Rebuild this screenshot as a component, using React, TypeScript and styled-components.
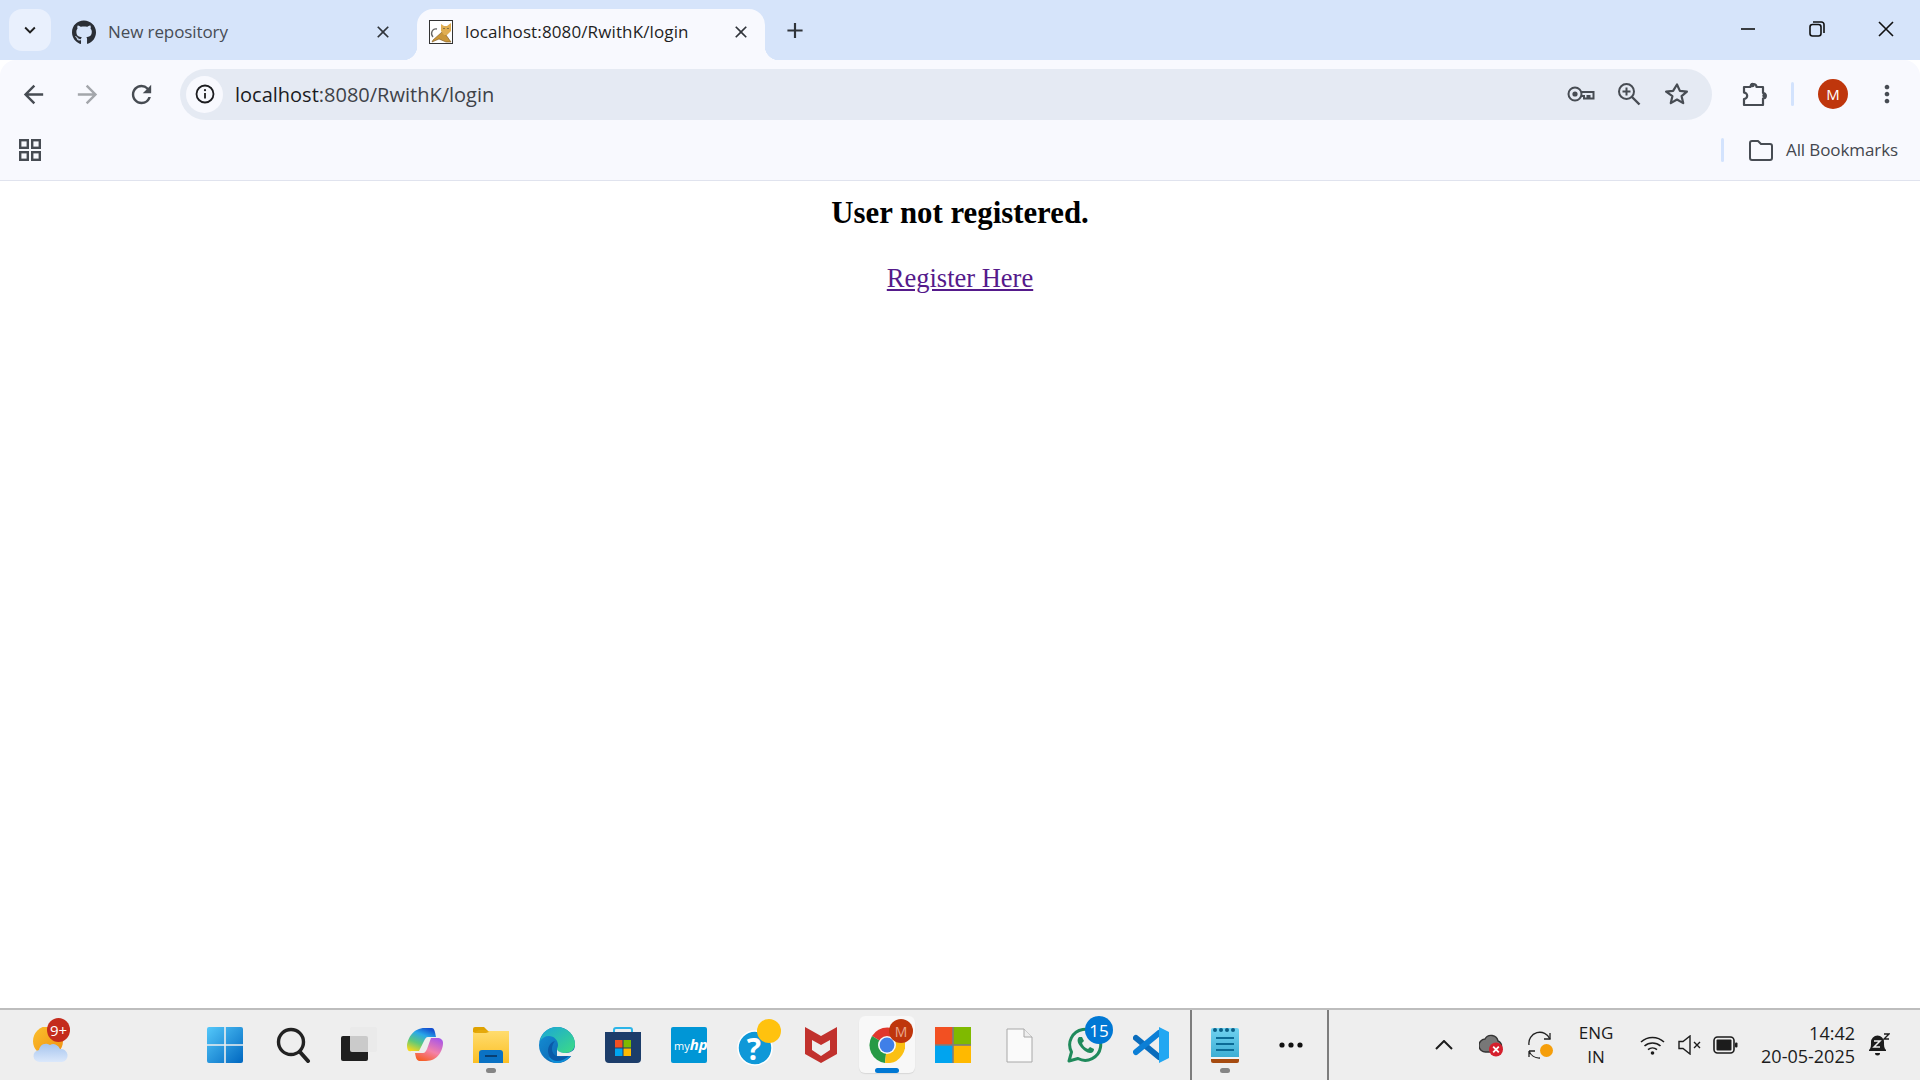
import React from 'react'
import styled, { createGlobalStyle } from 'styled-components'
import { FaGithub } from 'react-icons/fa'
import { MdArrowBack, MdArrowForward, MdRefresh, MdClose, MdAdd, MdKeyboardArrowDown, MdMoreVert } from 'react-icons/md'

const GlobalStyle = createGlobalStyle`
  html, body {
    margin: 0;
    padding: 0;
    background: #fff;
    overflow: hidden;
  }
`

const UI_FONT = `'Open Sans', 'Noto Sans', sans-serif`

const Screen = styled.div`
  width: 1920px;
  height: 1080px;
  display: flex;
  flex-direction: column;
  overflow: hidden;
  font-family: ${UI_FONT};
`

/* browser tabs */
const TabStrip = styled.div`
  height: 60px;
  flex: none;
  display: flex;
  background: #d6e4fa;
  padding-left: 9px;
`
const TabListButton = styled.div`
  width: 42px;
  height: 42px;
  margin-top: 9px;
  border-radius: 13px;
  background: #e9f0fd;
  display: flex;
  align-items: center;
  justify-content: center;
  color: #1f1f1f;
  font-size: 22px;
`
const Tab = styled.div<{ $active?: boolean }>`
  position: relative;
  height: 51px;
  margin-top: 9px;
  width: ${p => (p.$active ? '348px' : '366px')};
  padding-left: ${p => (p.$active ? '12px' : '21px')};
  box-sizing: border-box;
  display: flex;
  align-items: center;
  padding-bottom: 6px;
  border-radius: 16px 16px 0 0;
  background: ${p => (p.$active ? '#f8f9fe' : 'transparent')};
  color: ${p => (p.$active ? '#1f1f1f' : '#474c55')};
  font-size: 17px;
  letter-spacing: ${p => (p.$active ? '0.12px' : '-0.1px')};

  ${p =>
    p.$active &&
    `
    &::before, &::after {
      content: '';
      position: absolute;
      bottom: 0;
      width: 14px;
      height: 14px;
    }
    &::before {
      left: -14px;
      background: radial-gradient(circle at 0 0, transparent 14px, #f8f9fe 14.5px);
    }
    &::after {
      right: -14px;
      background: radial-gradient(circle at 100% 0, transparent 14px, #f8f9fe 14.5px);
    }
  `}
`
const TabIconSlot = styled.div`
  width: 24px;
  height: 24px;
  flex: none;
  margin-right: 12px;
  display: flex;
  font-size: 25px;
  color: #2a2e35;
`
const TabTitle = styled.span`
  flex: 1;
  white-space: nowrap;
`
const TabClose = styled.div<{ $active?: boolean }>`
  width: 20px;
  height: 20px;
  flex: none;
  margin-right: ${p => (p.$active ? '14px' : '24px')};
  display: flex;
  align-items: center;
  justify-content: center;
  font-size: 20px;
  color: #30343a;
`
const NewTab = styled.div`
  margin-left: 17px;
  margin-top: 17px;
  width: 26px;
  height: 26px;
  display: flex;
  align-items: center;
  justify-content: center;
  font-size: 27px;
  color: #30343a;
`
const Spacer = styled.div`
  flex: 1;
`
const WindowButton = styled.div`
  width: 69px;
  height: 58px;
  display: flex;
  align-items: center;
  justify-content: center;
`

/* toolbar */
const Toolbar = styled.div`
  height: 70px;
  box-sizing: border-box;
  flex: none;
  display: flex;
  align-items: center;
  background: #f8f9fe;
  border-radius: 16px 16px 0 0;
  position: relative;
  z-index: 1;
  padding: 0 0 2px 15px;
`
const NavButton = styled.div<{ $dim?: boolean }>`
  width: 36px;
  height: 36px;
  margin-right: 18px;
  display: flex;
  align-items: center;
  justify-content: center;
  font-size: 29px;
  color: ${p => (p.$dim ? '#a3a6ab' : '#474c53')};
`
const Omnibox = styled.div`
  width: 1532px;
  height: 51px;
  margin-left: 3px;
  flex: none;
  box-sizing: border-box;
  padding: 0 21px 0 6px;
  border-radius: 26px;
  background: #e5eaf3;
  display: flex;
  align-items: center;
`
const SiteInfo = styled.div`
  width: 37px;
  height: 37px;
  border-radius: 50%;
  background: #f8f9fe;
  display: flex;
  align-items: center;
  justify-content: center;
  flex: none;
`
const UrlText = styled.div`
  flex: 1;
  margin-left: 12px;
  font-size: 20px;
  color: #3e4248;
  white-space: nowrap;
`
const UrlHost = styled.span`
  color: #1b1c1f;
`
const OmniIcon = styled.div`
  width: 28px;
  height: 28px;
  margin-left: 20px;
  display: flex;
  align-items: center;
  justify-content: center;
`
const ToolbarIcon = styled.div`
  width: 28px;
  height: 28px;
  margin-left: 28px;
  display: flex;
  align-items: center;
  justify-content: center;
`
const ThinSeparator = styled.div<{ $h: number }>`
  width: 3px;
  height: ${p => p.$h}px;
  margin-left: 23px;
  background: #d3e3fd;
  border-radius: 2px;
  flex: none;
`
const Avatar = styled.div`
  width: 30px;
  height: 30px;
  margin-left: 24px;
  border-radius: 50%;
  background: #bf360c;
  color: #fff;
  font-size: 15px;
  display: flex;
  align-items: center;
  justify-content: center;
  flex: none;
`
const MenuDots = styled.div`
  margin-left: 25px;
  width: 28px;
  height: 28px;
  display: flex;
  align-items: center;
  justify-content: center;
  color: #474c53;
  font-size: 30px;
`

/* bookmarks bar */
const BookmarksBar = styled.div`
  height: 51px;
  box-sizing: border-box;
  flex: none;
  display: flex;
  align-items: flex-start;
  padding: 8px 0 0 19px;
  background: #f8f9fe;
  border-bottom: 1px solid #e0e3ee;
`
const AppsSlot = styled.div`
  display: flex;
  padding-top: 1px;
`
const AllBookmarks = styled.div`
  display: flex;
  align-items: center;
  height: 24px;
  margin-left: auto;
  padding-right: 22px;
  font-size: 17px;
  line-height: 22px;
  color: #44474e;
  letter-spacing: -0.1px;
`
const BookmarkSeparator = styled.div`
  width: 3px;
  height: 24px;
  background: #d3e3fd;
  margin-right: 25px;
  border-radius: 2px;
`
const FolderSlot = styled.div`
  width: 26px;
  height: 24px;
  margin-right: 11px;
  display: flex;
  align-items: center;
`

/* page content */
const Content = styled.main`
  flex: 1;
  background: #fff;
  text-align: center;
  font-family: 'Liberation Serif', 'Times New Roman', serif;
  padding-top: 14px;
  color: #000;
`
const Title = styled.h2`
  margin: 0;
  font-size: 30.8px;
  font-weight: 700;
  line-height: 36px;
`
const Paragraph = styled.p`
  margin: 32px 0 0;
  font-size: 26.5px;
  line-height: 30px;
`
const RegisterLink = styled.a`
  color: #551a8b;
  text-decoration: underline;
`

/* windows taskbar */
const Taskbar = styled.footer`
  height: 72px;
  box-sizing: border-box;
  flex: none;
  display: flex;
  align-items: stretch;
  background: #eeeeee;
  border-top: 2px solid #bdbdbd;
`
const WeatherCell = styled.div`
  position: relative;
  width: 66px;
  flex: none;
  margin: 0 110px 0 18px;
  display: flex;
  align-items: center;
  justify-content: center;
`
const IconCell = styled.div`
  position: relative;
  width: 66px;
  flex: none;
  display: flex;
  align-items: center;
  justify-content: center;
`
const IconFront = styled.div`
  position: relative;
  display: flex;
`
const ActiveTile = styled.div`
  position: absolute;
  left: 5px;
  top: 6px;
  width: 56px;
  height: 57px;
  background: #f8f8f8;
  border-radius: 6px;
  box-shadow: 0 1px 1px #d8d8d8;
`
const ActiveBar = styled.div`
  position: absolute;
  left: 21px;
  bottom: 7px;
  width: 24px;
  height: 5px;
  border-radius: 3px;
  background: #0078d4;
`
const RunningDot = styled.div`
  position: absolute;
  left: 28px;
  bottom: 7px;
  width: 10px;
  height: 5px;
  border-radius: 3px;
  background: #858585;
`
const CountBadge = styled.div<{ $bg: string; $fg?: string; $x: number; $y: number; $w: number; $h: number; $size: number }>`
  position: absolute;
  left: ${p => p.$x}px;
  top: ${p => p.$y}px;
  width: ${p => p.$w}px;
  height: ${p => p.$h}px;
  border-radius: 50%;
  background: ${p => p.$bg};
  color: ${p => p.$fg || '#fff'};
  font-size: ${p => p.$size}px;
  display: flex;
  align-items: center;
  justify-content: center;
`
const TaskSeparator = styled.div<{ $left: number }>`
  width: 2px;
  flex: none;
  margin-left: ${p => p.$left}px;
  background: #7d7d7d;
`
const Tray = styled.div`
  flex: 1;
  display: flex;
  align-items: center;
  padding-left: 100px;
`
const TrayIcon = styled.div<{ $w: number; $ml: number }>`
  width: ${p => p.$w}px;
  margin-left: ${p => p.$ml}px;
  flex: none;
  display: flex;
  align-items: center;
  justify-content: center;
`
const LangBlock = styled.div`
  width: 44px;
  margin-left: 20px;
  flex: none;
  text-align: center;
  font-size: 17px;
  line-height: 24px;
  color: #1c1c1c;
`
const Clock = styled.div`
  width: 104px;
  margin-left: 13px;
  flex: none;
  text-align: right;
  font-size: 18px;
  line-height: 23px;
  color: #1c1c1c;
  white-space: nowrap;
`

const TomcatIcon = () => (
  <svg width="24" height="24" viewBox="0 0 24 24">
    <rect x="0.5" y="0.5" width="23" height="23" fill="#fff" stroke="#333" />
    <path d="M4 17c-3-3-1-9 4-8" fill="none" stroke="#666" strokeWidth="1.3" />
    <path d="M13 12L4 20l-1 2 7-3 7 3h5l-5-7z" fill="#c9963a" stroke="#7a5520" strokeWidth="0.6" />
    <path d="M12 4l3 2h3l4-3v8l-4 4h-3l-3-4z" fill="#e0ae52" />
    <path d="M14.5 8.5h1M18.5 8.5h1" stroke="#333" strokeWidth="1" />
  </svg>
)

const MinimizeIcon = () => (
  <svg width="16" height="16" viewBox="0 0 16 16">
    <path d="M1 8h14" stroke="#111" strokeWidth="1.6" />
  </svg>
)
const RestoreIcon = () => (
  <svg width="16" height="16" viewBox="0 0 16 16" fill="none" stroke="#111" strokeWidth="1.6">
    <rect x="1" y="3.5" width="11" height="11.5" rx="2.5" />
    <path d="M4 1h8.5A2.5 2.5 0 0 1 15 3.5V12" />
  </svg>
)
const CloseWinIcon = () => (
  <svg width="16" height="16" viewBox="0 0 16 16">
    <path d="M1 1l14 14M15 1L1 15" stroke="#111" strokeWidth="1.6" />
  </svg>
)
const InfoIcon = () => (
  <svg width="20" height="20" viewBox="0 0 20 20" fill="none">
    <circle cx="10" cy="10" r="8.5" stroke="#1c1d20" strokeWidth="1.8" />
    <path d="M10 9v5.5" stroke="#1c1d20" strokeWidth="1.8" />
    <circle cx="10" cy="6.2" r="1.1" fill="#1c1d20" />
  </svg>
)
const KeyIcon = () => (
  <svg width="28" height="16" viewBox="0 0 28 16" fill="none">
    <circle cx="8" cy="8" r="6.5" stroke="#474c53" strokeWidth="2" />
    <circle cx="8" cy="8" r="2.6" fill="#474c53" />
    <path d="M14 6h12.5v6.5h-4V10h-2v2.5h-3.5V10H14" stroke="#474c53" strokeWidth="2" />
  </svg>
)
const ZoomIcon = () => (
  <svg width="24" height="24" viewBox="0 0 24 24" fill="none" stroke="#474c53" strokeWidth="2">
    <circle cx="9.5" cy="9.5" r="7.5" />
    <path d="M15 15l7.5 7.5" strokeWidth="2.4" />
    <path d="M9.5 5.5v8M5.5 9.5h8" />
  </svg>
)
const StarIcon = () => (
  <svg width="24" height="24" viewBox="0 0 24 24" fill="none" stroke="#474c53" strokeWidth="2.2" strokeLinejoin="round">
    <path d="M12 2.5l2.9 6.4 7 .7-5.3 4.6 1.6 6.9-6.2-3.6-6.2 3.6 1.6-6.9L1.1 9.6l7-.7z" />
  </svg>
)
const PuzzleIcon = () => (
  <svg width="26" height="26" viewBox="0 0 26 26" fill="none" stroke="#474c53" strokeWidth="2.2" strokeLinejoin="round">
    <path d="M3 6h6.5a3 3 0 0 1 6 0H22v6a2.6 2.6 0 0 1 0 5.5V24H3v-6a3.2 3.2 0 0 0 0-6.4z" />
    <circle cx="11.5" cy="4" r="2.2" fill="#474c53" stroke="none" />
    <circle cx="23.5" cy="14.7" r="2.2" fill="#474c53" stroke="none" />
  </svg>
)
const AppsIcon = () => (
  <svg width="22" height="22" viewBox="0 0 22 22" fill="none" stroke="#474c53" strokeWidth="2.4">
    <rect x="1.2" y="1.2" width="7.6" height="7.6" />
    <rect x="13.2" y="1.2" width="7.6" height="7.6" />
    <rect x="1.2" y="13.2" width="7.6" height="7.6" />
    <rect x="13.2" y="13.2" width="7.6" height="7.6" />
  </svg>
)
const FolderIcon = () => (
  <svg width="24" height="21" viewBox="0 0 24 21" fill="none" stroke="#474c53" strokeWidth="2" strokeLinejoin="round">
    <path d="M1 3a2 2 0 0 1 2-2h6l3 3h9a2 2 0 0 1 2 2v12a2 2 0 0 1-2 2H3a2 2 0 0 1-2-2z" />
  </svg>
)

const WeatherIcon = () => (
  <svg width="36" height="36" viewBox="0 0 36 36">
    <defs>
      <linearGradient id="sun" x1="0" y1="0" x2="1" y2="1">
        <stop offset="0" stopColor="#fbc02d" />
        <stop offset="1" stopColor="#ef8f12" />
      </linearGradient>
      <linearGradient id="cloud" x1="0" y1="0" x2="0" y2="1">
        <stop offset="0" stopColor="#a5c4ee" />
        <stop offset="1" stopColor="#dbe8fb" />
      </linearGradient>
    </defs>
    <circle cx="15" cy="14" r="15" fill="url(#sun)" />
    <path d="M7 35a6 6 0 0 1-1-12 7 7 0 0 1 11-5 7 7 0 0 1 10 4 6.5 6.5 0 0 1 2 13z" fill="url(#cloud)" />
  </svg>
)
const WindowsIcon = () => (
  <svg width="40" height="36" viewBox="0 0 40 36">
    <defs>
      <linearGradient id="win" x1="0" y1="0" x2="1" y2="1">
        <stop offset="0" stopColor="#54c8fa" />
        <stop offset="1" stopColor="#0067c0" />
      </linearGradient>
    </defs>
    <path d="M2 0h15.2v17.2H0V2a2 2 0 0 1 2-2zM18.8 0H34a2 2 0 0 1 2 2v15.2H18.8zM0 18.8h17.2V36H2a2 2 0 0 1-2-2zM18.8 18.8H36V34a2 2 0 0 1-2 2H18.8z" fill="url(#win)" />
  </svg>
)
const SearchIcon = () => (
  <svg width="36" height="36" viewBox="0 0 36 36" fill="none" stroke="#222" strokeLinecap="round">
    <circle cx="16" cy="15" r="12.5" strokeWidth="3.4" />
    <path d="M25 25l8 9" strokeWidth="4" />
  </svg>
)
const TaskViewIcon = () => (
  <svg width="36" height="36" viewBox="0 0 36 36">
    <rect x="0" y="9" width="27" height="25" rx="2" fill="#1f1f1f" />
    <rect x="9" y="0" width="27" height="25" rx="2" fill="#e9e9e9" opacity="0.85" />
  </svg>
)
const CopilotIcon = () => (
  <svg width="36" height="34" viewBox="0 0 36 34">
    <defs>
      <linearGradient id="cp1" x1="0.7" y1="0" x2="0.2" y2="1">
        <stop offset="0" stopColor="#1450d0" />
        <stop offset="0.3" stopColor="#2aa8e8" />
        <stop offset="0.65" stopColor="#5ec97a" />
        <stop offset="1" stopColor="#f6d81c" />
      </linearGradient>
      <linearGradient id="cp2" x1="0.8" y1="0" x2="0.3" y2="1">
        <stop offset="0" stopColor="#a855e8" />
        <stop offset="0.55" stopColor="#f481a8" />
        <stop offset="1" stopColor="#f5602a" />
      </linearGradient>
    </defs>
    <path d="M18 0h7c2 0 3 3 4 9h-8c-2 0-3 2-4 4l-5 10H4c-3 1-4-2-4-6C1 10 6 0 18 0z" fill="url(#cp1)" />
    <path d="M24 10h6c4 0 6 2 6 5 0 7-5 18-17 18h-6c-3 0-4-2-5-8h8c2 0 3-2 4-4z" fill="url(#cp2)" />
  </svg>
)
const ExplorerIcon = () => (
  <svg width="36" height="36" viewBox="0 0 36 36">
    <defs>
      <linearGradient id="fold" x1="0" y1="0" x2="0" y2="1">
        <stop offset="0" stopColor="#ffdc6e" />
        <stop offset="1" stopColor="#fbbf24" />
      </linearGradient>
    </defs>
    <path d="M0 2a2 2 0 0 1 2-2h9l4 4h19a2 2 0 0 1 2 2v4H0z" fill="#dfa200" />
    <path d="M0 5h13l3-1h20v32H0z" fill="url(#fold)" />
    <path d="M6 3h7l3 2-3 1H0z" fill="#e5a90a" />
    <path d="M6 36V26a3 3 0 0 1 3-3h18a3 3 0 0 1 3 3v10z" fill="#0a72c4" />
    <rect x="12" y="28" width="12" height="2" fill="#083f73" />
  </svg>
)
const EdgeIcon = () => (
  <svg width="36" height="36" viewBox="0 0 36 36">
    <defs>
      <linearGradient id="edge1" x1="0" y1="0" x2="1" y2="1">
        <stop offset="0" stopColor="#1aa5d9" />
        <stop offset="1" stopColor="#3ddc84" />
      </linearGradient>
      <linearGradient id="edge2" x1="0" y1="0" x2="1" y2="1">
        <stop offset="0" stopColor="#1593d8" />
        <stop offset="1" stopColor="#0b5aa8" />
      </linearGradient>
    </defs>
    <circle cx="18" cy="18" r="18" fill="url(#edge2)" />
    <path d="M1 14C3 5 10 0 18 0c10 0 18 8 18 17 0 5-4 9-10 9-5 0-8-2-8-4 0-1 1-2 1-4 0-5-4-9-9-9-4 0-7 2-9 5z" fill="url(#edge1)" />
    <path d="M32 28c-3 5-9 8-14 8-4 0-7-2-9-6 2 1 5 2 8 2 6 0 11-1 15-4z" fill="#0d8fd8" />
    <path d="M13 22c0 5 4 8 9 8 3 0 6-1 8-2-3 4-7 6-12 6-6 0-9-6-9-10 0-5 3-9 7-10-2 2-3 5-3 8z" fill="#0b5aa8" />
    <path d="M36 20c-1 4-5 6-10 6-4 0-8-2-8-4v7h18z" fill="#eeeeee" />
  </svg>
)
const StoreIcon = () => (
  <svg width="36" height="36" viewBox="0 0 36 36">
    <path d="M9 7V3a2 2 0 0 1 2-2h14a2 2 0 0 1 2 2v4" fill="none" stroke="#2cb5e8" strokeWidth="2" />
    <path d="M0 5h36v27a4 4 0 0 1-4 4H4a4 4 0 0 1-4-4z" fill="#1c3d6a" />
    <rect x="10" y="13" width="7.5" height="7.5" fill="#f25022" />
    <rect x="18.5" y="13" width="7.5" height="7.5" fill="#7fba00" />
    <rect x="10" y="21.5" width="7.5" height="7.5" fill="#00a4ef" />
    <rect x="18.5" y="21.5" width="7.5" height="7.5" fill="#ffb900" />
  </svg>
)
const MyHpIcon = () => (
  <svg width="36" height="36" viewBox="0 0 36 36">
    <rect width="36" height="36" rx="2" fill="#0096d6" />
    <text x="3" y="23" fontSize="11" fill="#fff" fontFamily="'Open Sans', sans-serif">
      my
      <tspan fontWeight="700" fontStyle="italic" fontSize="15">
        hp
      </tspan>
    </text>
  </svg>
)
const HelpIcon = () => (
  <svg width="52" height="54" viewBox="0 0 52 54">
    <circle cx="26" cy="30" r="17" fill="#0f98d8" stroke="#fff" strokeWidth="1.5" />
    <text x="25" y="42" textAnchor="middle" fontSize="30" fontWeight="700" fill="#fff" fontFamily="'Open Sans', sans-serif">
      ?
    </text>
    <circle cx="40" cy="13" r="12" fill="#ffc20e" />
  </svg>
)
const McAfeeIcon = () => (
  <svg width="32" height="36" viewBox="0 0 32 36">
    <path fillRule="evenodd" d="M0 0l16 9 16-9v27l-16 9-16-9zM7 13v10l9 6 9-6V13l-9 5z" fill="#c1312d" />
  </svg>
)
const ChromeIcon = () => (
  <svg width="36" height="36" viewBox="0 0 36 36">
    <path d="M18 18L3 9A18 18 0 0 1 33.6 9z" fill="#e0372c" />
    <path d="M18 18L3 9A18 18 0 0 0 16 36z" fill="#279a45" />
    <path d="M18 18L33.6 9A18 18 0 0 1 16 36z" fill="#fbc012" />
    <circle cx="18" cy="18" r="9" fill="#f8f8f8" />
    <circle cx="18" cy="18" r="7.4" fill="#3f7fe8" />
  </svg>
)
const MsIcon = () => (
  <svg width="36" height="36" viewBox="0 0 36 36">
    <rect width="36" height="36" fill="#7e7e7e" />
    <rect width="17.2" height="17.2" fill="#f25022" />
    <rect x="18.8" width="17.2" height="17.2" fill="#7fba00" />
    <rect y="18.8" width="17.2" height="17.2" fill="#00a4ef" />
    <rect x="18.8" y="18.8" width="17.2" height="17.2" fill="#ffb900" />
  </svg>
)
const FileIcon = () => (
  <svg width="27" height="35" viewBox="0 0 27 35" fill="#fafafa" stroke="#a8a8a8">
    <path d="M1 1h17l8 8v25H1z" />
    <path d="M18 1v8h8" fill="#eee" />
  </svg>
)
const WhatsAppIcon = () => (
  <svg width="36" height="36" viewBox="0 0 36 36" fill="none">
    <path d="M2 34l2.5-9A15.5 15.5 0 1 1 11 31.5z" stroke="#1f8a5b" strokeWidth="3" strokeLinejoin="round" />
    <path d="M12 10c-2 2-2 5 1 9s7 7 10 7 4-2 4-4l-4-2-2 2c-3-1-5-3-6-6l2-2-2-4z" fill="#1f8a5b" />
  </svg>
)
const VsCodeIcon = () => (
  <svg width="36" height="36" viewBox="0 0 36 36">
    <path d="M3 11l23 19" stroke="#0a6cbc" strokeWidth="6" strokeLinecap="round" />
    <path d="M3 25L26 6" stroke="#0c7fd6" strokeWidth="6" strokeLinecap="round" />
    <path d="M26 0l10 5v26l-10 5z" fill="#22a7f2" />
  </svg>
)
const NotepadIcon = () => (
  <svg width="28" height="36" viewBox="0 0 28 36">
    <defs>
      <linearGradient id="pad" x1="0" y1="0" x2="0" y2="1">
        <stop offset="0" stopColor="#70d2f0" />
        <stop offset="1" stopColor="#3eaed4" />
      </linearGradient>
    </defs>
    <path d="M2 1h24a2 2 0 0 1 2 2v27H0V3a2 2 0 0 1 2-2z" fill="url(#pad)" />
    <rect x="0" y="30" width="28" height="2" fill="#f4f4f4" />
    <path d="M0 32h28v2a2 2 0 0 1-2 2H2a2 2 0 0 1-2-2z" fill="#a64b10" />
    <path d="M5 11h18M5 17h18M5 23h18" stroke="#0b6b96" strokeWidth="2" />
    <g fill="#0b5f86">
      <circle cx="4" cy="3" r="2" />
      <circle cx="10" cy="3" r="2" />
      <circle cx="16" cy="3" r="2" />
      <circle cx="22" cy="3" r="2" />
    </g>
  </svg>
)
const MoreIcon = () => (
  <svg width="24" height="6" viewBox="0 0 24 6" fill="#111">
    <circle cx="3" cy="3" r="2.6" />
    <circle cx="12" cy="3" r="2.6" />
    <circle cx="21" cy="3" r="2.6" />
  </svg>
)
const ChevronUpIcon = () => (
  <svg width="18" height="10" viewBox="0 0 18 10" fill="none" stroke="#1c1c1c" strokeWidth="2">
    <path d="M1 9l8-8 8 8" />
  </svg>
)
const CloudErrorIcon = () => (
  <svg width="25" height="24" viewBox="0 0 25 24">
    <path d="M7 19a6.5 6.5 0 0 1-1-13 7 7 0 0 1 13 2 6 6 0 0 1 0 11z" fill="#777" stroke="#333" strokeWidth="1.4" />
    <circle cx="17" cy="16.5" r="7" fill="#d5202d" />
    <path d="M14.2 13.7l5.6 5.6M19.8 13.7l-5.6 5.6" stroke="#fff" strokeWidth="1.8" />
  </svg>
)
const SyncIcon = () => (
  <svg width="26" height="28" viewBox="0 0 26 28" fill="none" stroke="#222" strokeWidth="1.3">
    <path d="M1 14A11 11 0 0 1 22 8" />
    <path d="M22 2v6h-6" />
    <path d="M1 20h6M1 20v6M1 20a11 11 0 0 0 11 7" />
    <circle cx="18.5" cy="19.5" r="6.5" fill="#f59e0b" stroke="none" />
  </svg>
)
const WifiIcon = () => (
  <svg width="25" height="20" viewBox="0 0 25 20" fill="none" stroke="#1c1c1c" strokeWidth="1.6">
    <path d="M1 7a17 17 0 0 1 23 0M4.5 11a12 12 0 0 1 16 0M8 14.6a7 7 0 0 1 9 0" />
    <circle cx="12.5" cy="18" r="1.8" fill="#1c1c1c" stroke="none" />
  </svg>
)
const MuteIcon = () => (
  <svg width="24" height="20" viewBox="0 0 24 20" fill="none" stroke="#1c1c1c" strokeWidth="1.4">
    <path d="M1 6.5h4L12 1v18l-7-5.5H1z" />
    <path d="M16 7l6 6M22 7l-6 6" />
  </svg>
)
const BatteryIcon = () => (
  <svg width="25" height="18" viewBox="0 0 25 18">
    <rect x="1" y="1" width="20" height="16" rx="3.5" fill="none" stroke="#1c1c1c" strokeWidth="1.6" />
    <rect x="3.5" y="3.5" width="15" height="11" rx="1" fill="#1c1c1c" />
    <rect x="22" y="6.5" width="2.5" height="5" rx="1" fill="#1c1c1c" />
  </svg>
)
const BellIcon = () => (
  <svg width="22" height="24" viewBox="0 0 22 24">
    <path d="M1 17c2-2 2-4 2-8a6.5 6.5 0 0 1 13 0c0 4 0 6 2 8v1H1z" fill="#1c1c1c" />
    <path d="M7 20h5a2.5 2.5 0 0 1-5 0z" fill="#1c1c1c" />
    <path d="M6 8h6l-6 6h6" stroke="#eee" strokeWidth="1.5" fill="none" />
    <path d="M16 1h5l-5 5h5" stroke="#1c1c1c" strokeWidth="1.4" fill="none" />
  </svg>
)

const centerApps: { id: string; icon: React.ReactNode; running?: boolean; active?: boolean; badge?: React.ReactNode }[] = [
  { id: 'start', icon: <WindowsIcon /> },
  { id: 'search', icon: <SearchIcon /> },
  { id: 'taskview', icon: <TaskViewIcon /> },
  { id: 'copilot', icon: <CopilotIcon /> },
  { id: 'explorer', icon: <ExplorerIcon />, running: true },
  { id: 'edge', icon: <EdgeIcon /> },
  { id: 'store', icon: <StoreIcon /> },
  { id: 'myhp', icon: <MyHpIcon /> },
  { id: 'help', icon: <HelpIcon /> },
  { id: 'mcafee', icon: <McAfeeIcon /> },
  {
    id: 'chrome',
    icon: <ChromeIcon />,
    active: true,
    badge: (
      <CountBadge $bg="#bf360c" $fg="#eaa88c" $x={35} $y={9} $w={24} $h={24} $size={14}>
        M
      </CountBadge>
    ),
  },
  { id: 'ms', icon: <MsIcon /> },
  { id: 'file', icon: <FileIcon /> },
  {
    id: 'whatsapp',
    icon: <WhatsAppIcon />,
    badge: (
      <CountBadge $bg="#0078d4" $x={33} $y={6} $w={28} $h={28} $size={17}>
        15
      </CountBadge>
    ),
  },
  { id: 'vscode', icon: <VsCodeIcon /> },
]

const App: React.FC = () => (
  <Screen>
    <GlobalStyle />
    <TabStrip>
      <TabListButton>
        <MdKeyboardArrowDown />
      </TabListButton>
      <Tab>
        <TabIconSlot>
          <FaGithub />
        </TabIconSlot>
        <TabTitle>New repository</TabTitle>
        <TabClose>
          <MdClose />
        </TabClose>
      </Tab>
      <Tab $active>
        <TabIconSlot>
          <TomcatIcon />
        </TabIconSlot>
        <TabTitle>localhost:8080/RwithK/login</TabTitle>
        <TabClose $active>
          <MdClose />
        </TabClose>
      </Tab>
      <NewTab>
        <MdAdd />
      </NewTab>
      <Spacer />
      <WindowButton>
        <MinimizeIcon />
      </WindowButton>
      <WindowButton>
        <RestoreIcon />
      </WindowButton>
      <WindowButton>
        <CloseWinIcon />
      </WindowButton>
    </TabStrip>

    <Toolbar>
      <NavButton>
        <MdArrowBack />
      </NavButton>
      <NavButton $dim>
        <MdArrowForward />
      </NavButton>
      <NavButton>
        <MdRefresh />
      </NavButton>
      <Omnibox>
        <SiteInfo>
          <InfoIcon />
        </SiteInfo>
        <UrlText>
          <UrlHost>localhost</UrlHost>:8080/RwithK/login
        </UrlText>
        <OmniIcon>
          <KeyIcon />
        </OmniIcon>
        <OmniIcon>
          <ZoomIcon />
        </OmniIcon>
        <OmniIcon>
          <StarIcon />
        </OmniIcon>
      </Omnibox>
      <ToolbarIcon>
        <PuzzleIcon />
      </ToolbarIcon>
      <ThinSeparator $h={24} />
      <Avatar>M</Avatar>
      <MenuDots>
        <MdMoreVert />
      </MenuDots>
    </Toolbar>

    <BookmarksBar>
      <AppsSlot>
        <AppsIcon />
      </AppsSlot>
      <AllBookmarks>
        <BookmarkSeparator />
        <FolderSlot>
          <FolderIcon />
        </FolderSlot>
        All Bookmarks
      </AllBookmarks>
    </BookmarksBar>

    <Content>
      <Title>User not registered.</Title>
      <Paragraph>
        <RegisterLink href="#">Register Here</RegisterLink>
      </Paragraph>
    </Content>

    <Taskbar>
      <WeatherCell>
        <WeatherIcon />
        <CountBadge $bg="#c42b1c" $x={29} $y={8} $w={23} $h={24} $size={15}>
          9+
        </CountBadge>
      </WeatherCell>
      {centerApps.map(app => (
        <IconCell key={app.id}>
          {app.active && <ActiveTile />}
          <IconFront>{app.icon}</IconFront>
          {app.badge}
          {app.active && <ActiveBar />}
          {app.running && <RunningDot />}
        </IconCell>
      ))}
      <TaskSeparator $left={6} />
      <IconCell>
        <NotepadIcon />
        <RunningDot />
      </IconCell>
      <IconCell>
        <MoreIcon />
      </IconCell>
      <TaskSeparator $left={3} />
      <Tray>
        <TrayIcon $w={18} $ml={6}>
          <ChevronUpIcon />
        </TrayIcon>
        <TrayIcon $w={25} $ml={26}>
          <CloudErrorIcon />
        </TrayIcon>
        <TrayIcon $w={26} $ml={24}>
          <SyncIcon />
        </TrayIcon>
        <LangBlock>
          ENG
          <br />
          IN
        </LangBlock>
        <TrayIcon $w={25} $ml={22}>
          <WifiIcon />
        </TrayIcon>
        <TrayIcon $w={24} $ml={13}>
          <MuteIcon />
        </TrayIcon>
        <TrayIcon $w={25} $ml={11}>
          <BatteryIcon />
        </TrayIcon>
        <Clock>
          14:42
          <br />
          20-05-2025
        </Clock>
        <TrayIcon $w={22} $ml={13}>
          <BellIcon />
        </TrayIcon>
      </Tray>
    </Taskbar>
  </Screen>
)

export default App
